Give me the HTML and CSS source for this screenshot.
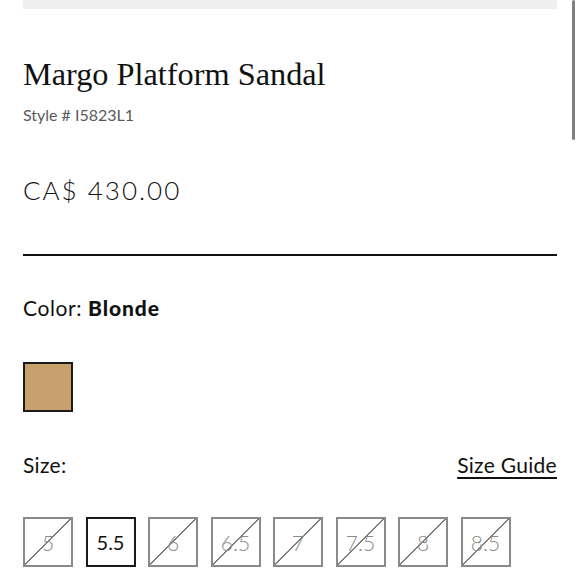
FILE: index.html
```html
<!DOCTYPE html>
<html lang="en">
<head>
<meta charset="utf-8">
<title>Margo Platform Sandal</title>
<link rel="stylesheet" href="styles.css">
</head>
<body>
<div class="page">
  <div class="gallery-strip"></div>
  <h1 class="title">Margo Platform Sandal</h1>
  <p class="style-no">Style # I5823L1</p>
  <p class="price">CA$ 430.00</p>
  <hr class="rule">
  <p class="color-label">Color: <strong>Blonde</strong></p>
  <div class="swatches">
    <button class="swatch swatch-blonde" aria-label="Blonde"></button>
  </div>
  <div class="size-head">
    <span class="size-label">Size:</span>
    <a class="size-guide" href="#">Size Guide</a>
  </div>
  <div class="sizes">
    <span class="size off">5</span>
    <span class="size on">5.5</span>
    <span class="size off">6</span>
    <span class="size off">6.5</span>
    <span class="size off">7</span>
    <span class="size off">7.5</span>
    <span class="size off">8</span>
    <span class="size off">8.5</span>
  </div>
</div>
<div class="scroll-thumb"></div>
</body>
</html>
```
FILE: styles.css
```css
html, body {
  margin: 0;
  padding: 0;
  background: #ffffff;
}
body {
  font-family: "Lato", "Open Sans", sans-serif;
  color: #111;
  width: 580px;
  height: 580px;
  overflow: hidden;
  position: relative;
}
.page {
  padding: 0 23px;
}
.gallery-strip {
  height: 9px;
  background: #efefef;
}
.title {
  margin: 47px 0 0;
  font-family: "Liberation Serif", serif;
  font-weight: 400;
  font-size: 32.3px;
  line-height: 36px;
  color: #111;
}
.style-no {
  margin: 13px 0 0;
  font-size: 16px;
  line-height: 20px;
  color: #5a5a5a;
}
.price {
  margin: 49px 0 0;
  font-size: 26px;
  line-height: 32px;
  font-weight: 300;
  letter-spacing: 2px;
  color: #111;
}
.rule {
  margin: 48px 0 0;
  border: 0;
  height: 2px;
  background: #111;
}
.color-label {
  margin: 39px 0 0;
  font-size: 21px;
  line-height: 26px;
  letter-spacing: 0.6px;
}
.color-label strong {
  font-weight: 900;
  letter-spacing: 0.9px;
}
.swatches {
  margin-top: 41px;
  display: flex;
}
.swatch {
  width: 50px;
  height: 50px;
  padding: 0;
  border: 2px solid #1a1a1a;
  background: #c7a06c;
}
.size-head {
  margin-top: 40px;
  display: flex;
  justify-content: space-between;
  align-items: center;
  font-size: 21px;
  line-height: 26px;
  letter-spacing: 0.3px;
}
.size-guide {
  color: #111;
  text-decoration: underline;
  text-underline-offset: 4px;
  text-decoration-thickness: 1.5px;
}
.sizes {
  margin-top: 39px;
  display: flex;
  gap: 12.5px;
}
.size {
  box-sizing: border-box;
  width: 50px;
  height: 50px;
  display: flex;
  align-items: center;
  justify-content: center;
  font-size: 20px;
  font-weight: 300;
}
.size.on {
  border: 2px solid #1a1a1a;
  color: #111;
  font-weight: 400;
}
.size.off {
  border: 2px solid #8a8a88;
  color: #8a8a88;
  font-size: 21px;
  background: linear-gradient(to bottom right, transparent calc(50% - 1px), #7d7d7b calc(50% - 1px), #7d7d7b calc(50% + 0.5px), transparent calc(50% + 0.5px));
}
.scroll-thumb {
  position: absolute;
  top: 0;
  right: 5px;
  width: 3px;
  height: 140px;
  background: #808080;
  border-radius: 2px;
}
```
